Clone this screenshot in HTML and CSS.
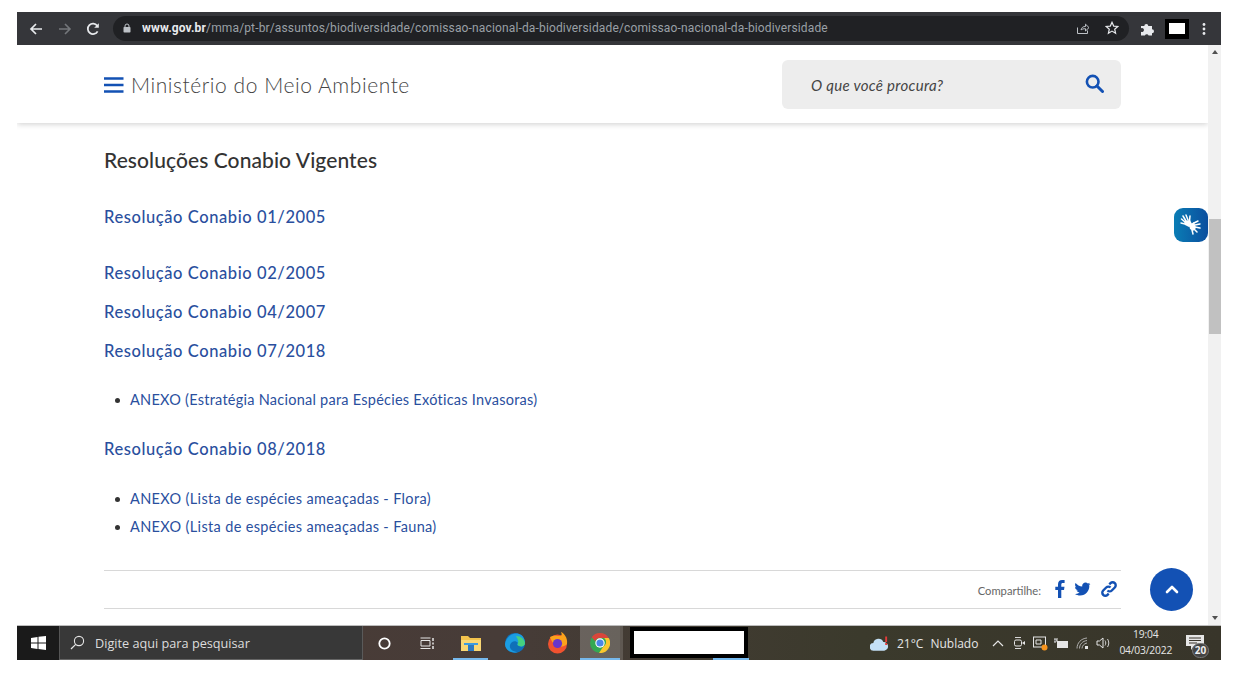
FILE: index.html
```html
<!DOCTYPE html>
<html lang="pt-BR">
<head>
<meta charset="utf-8">
<title>Ministério do Meio Ambiente</title>
<link rel="stylesheet" href="styles.css">
</head>
<body>
<div class="screen">
  <div class="chrome">
    <svg class="nav-icon" width="16" height="16" viewBox="0 0 16 16"><path d="M14 8H3M8 3L3 8l5 5" fill="none" stroke="#e8eaed" stroke-width="1.7"/></svg>
    <svg class="nav-icon" width="16" height="16" viewBox="0 0 16 16"><path d="M2 8h11M8 3l5 5-5 5" fill="none" stroke="#74777b" stroke-width="1.6"/></svg>
    <svg class="nav-icon" width="16" height="16" viewBox="0 0 16 16"><path d="M12.6 10.4A5.2 5.2 0 1 1 12.2 4.8" fill="none" stroke="#e8eaed" stroke-width="1.8"/><path d="M9.2 6.8h4.6V2.2z" fill="#e8eaed"/></svg>
    <div class="omnibox">
      <svg class="lock" width="8" height="10" viewBox="0 0 8 10"><path d="M2 4.500V3a2 2 0 0 1 4 0v1.500" fill="none" stroke="#bdc1c6" stroke-width="1"/><rect x="0.500" y="4" width="7" height="5.500" rx=".8" fill="#bdc1c6"/></svg>
      <span class="url"><b>www.gov.br</b>/mma/pt-br/assuntos/biodiversidade/comissao-nacional-da-biodiversidade/comissao-nacional-da-biodiversidade</span>
      <svg class="omni-icon" width="14" height="14" viewBox="0 0 14 14"><path d="M1.500 6.500v6h10V9.500M5 9c.5-2.500 2-3.500 4.500-3.500V3.200L13 6.600 9.500 10V7.700C7.500 7.700 6 8 5 9z" fill="none" stroke="#bdc1c6" stroke-width="1"/></svg>
      <svg class="omni-icon" width="14" height="14" viewBox="0 0 14 14"><path d="M7 1.300l1.700 3.800 4.100.4-3.100 2.700.9 4-3.600-2.100-3.600 2.100.9-4L1.200 5.500l4.100-.4z" fill="none" stroke="#e8eaed" stroke-width="1.200"/></svg>
    </div>
    <svg class="puzzle" width="15" height="15" viewBox="0 0 15 15"><path d="M1 5h3.300a2 2 0 1 1 4 0H12v3.300a2 2 0 1 1 0 4V14.500H8.600a2 2 0 0 0-3.700 0H1v-3.800a2 2 0 1 0 0-3.500z" fill="#e8eaed"/></svg>
    <div class="profile"><span class="profile-in"></span></div>
    <svg class="dots" width="4" height="14" viewBox="0 0 4 14"><circle cx="2" cy="2.500" r="1.400" fill="#e8eaed"/><circle cx="2" cy="7" r="1.400" fill="#e8eaed"/><circle cx="2" cy="11.500" r="1.400" fill="#e8eaed"/></svg>
  </div>

  <div class="viewport">
    <div class="page">
      <header class="site-header">
        <div class="brand">
          <svg class="burger" width="20" height="16" viewBox="0 0 20 16"><path d="M0 1.500h19.500M0 8h19.500M0 14.500h19.500" stroke="#1351b4" stroke-width="2.600"/></svg>
          <span class="brand-name">Ministério do Meio Ambiente</span>
        </div>
        <div class="search">
          <span class="search-text">O que você procura?</span>
          <svg class="search-icon" width="19" height="19" viewBox="0 0 19 19"><circle cx="7.700" cy="7.700" r="5.800" fill="none" stroke="#1351b4" stroke-width="2.600"/><path d="M12 12l5.500 5.500" stroke="#1351b4" stroke-width="3" stroke-linecap="round"/></svg>
        </div>
      </header>

      <main class="content">
        <h2 class="title">Resoluções Conabio Vigentes</h2>
        <a class="res res-first" href="#">Resolução Conabio 01/2005</a>
        <a class="res res-second" href="#">Resolução Conabio 02/2005</a>
        <a class="res res-next" href="#">Resolução Conabio 04/2007</a>
        <a class="res res-next" href="#">Resolução Conabio 07/2018</a>
        <ul class="annex annex-one">
          <li><a href="#">ANEXO (Estratégia Nacional para Espécies Exóticas Invasoras)</a></li>
        </ul>
        <a class="res res-after" href="#">Resolução Conabio 08/2018</a>
        <ul class="annex annex-two">
          <li><a href="#">ANEXO (Lista de espécies ameaçadas - Flora)</a></li>
          <li><a href="#">ANEXO (Lista de espécies ameaçadas - Fauna)</a></li>
        </ul>
        <div class="share">
          <span class="share-label">Compartilhe:</span>
          <svg width="10" height="18" viewBox="0 0 10 18"><path d="M3 18V10H.3V6.700H3V4.300C3 1.500 4.600 0 7.100 0c1.200 0 2.200.1 2.500.1v2.900H7.900C6.600 3 6.300 3.700 6.300 4.600v2.100h3.200L9 10H6.300v8z" fill="#1351b4"/></svg>
          <svg width="16" height="14" viewBox="0 0 17 14"><path d="M15.200 3.500v.5c0 4.600-3.500 9.800-9.800 9.800-2 0-3.800-.6-5.400-1.600 1.800.2 3.500-.3 4.900-1.400-1.500 0-2.800-1-3.200-2.400.6.100 1.100.1 1.600-.1C.9 8 .0 6.300 0 4.900c.5.300 1 .4 1.600.5C.1 4.300-.4 2.200.6 .6c1.700 2.100 4.300 3.500 7.100 3.700C7.200 1.700 9.200 0 11.100 0c1 0 1.900.4 2.500 1.100.8-.2 1.500-.4 2.200-.8-.3.8-.8 1.500-1.500 1.900.7-.1 1.400-.3 2-.5-.5.700-1 1.300-1.700 1.800z" fill="#1351b4"/></svg>
          <svg width="16" height="16" viewBox="0 0 16 16"><g fill="none" stroke="#1351b4" stroke-width="2.400"><path d="M6.500 9.500a3 3 0 0 0 4.300 0l3-3a3 3 0 0 0-4.300-4.300L8.300 3.400"/><path d="M9.500 6.500a3 3 0 0 0-4.300 0l-3 3a3 3 0 0 0 4.300 4.300l1.200-1.200"/></g></svg>
        </div>
      </main>

      <button class="vlibras" aria-label="VLibras">
        <svg width="22" height="22" viewBox="0 0 22 22"><g fill="none" stroke="#fff" stroke-width="1.500" stroke-linecap="round"><path d="M3 2l3 5M6 1l2 5M1.500 5l4 3.500M10 2L9.500 7M1 9l4 1"/><path d="M14 9l4-2M15 11l5-1M15 13l5 1M14 15l3 3M12 16l1 4"/></g><path d="M4 7l6-1 2 4-3 3-4-2zM9 11l5-3 2 6-3 3-3-2z" fill="#fff"/></svg>
      </button>
      <button class="to-top" aria-label="Voltar ao topo">
        <svg width="14" height="9" viewBox="0 0 14 9"><path d="M2 7l5-5 5 5" fill="none" stroke="#fff" stroke-width="2.600" stroke-linecap="round" stroke-linejoin="round"/></svg>
      </button>
    </div>
    <div class="scrollbar">
      <span class="arrow-up"></span>
      <span class="thumb"></span>
      <span class="arrow-down"></span>
    </div>
  </div>

  <div class="taskbar">
    <div class="start">
      <svg width="15" height="14" viewBox="0 0 15 14"><path d="M0 2l6.500-1v5.500H0zM7.500 .8L15 0v6.500H7.500zM0 7.500h6.500V13L0 12zM7.500 7.500H15V14l-7.500-1z" fill="#fff"/></svg>
    </div>
    <div class="tb-search">
      <svg width="15" height="15" viewBox="0 0 15 15"><circle cx="9" cy="6" r="4.600" fill="none" stroke="#e6e6e6" stroke-width="1.100"/><path d="M5.700 9.300L1 14" stroke="#e6e6e6" stroke-width="1.200"/></svg>
      <span>Digite aqui para pesquisar</span>
    </div>
    <div class="tb-apps">
      <div class="app"><svg width="15" height="15" viewBox="0 0 15 15"><circle cx="7.500" cy="7.500" r="5.200" fill="none" stroke="#fff" stroke-width="1.800"/></svg></div>
      <div class="app"><svg width="15" height="13" viewBox="0 0 15 13"><path d="M.5 1h10M.5 11.500h10M1 3.500h9v5.500H1z" fill="none" stroke="#e6e6e6" stroke-width="1"/><path d="M13 1v3M13 5.500v2M13 9v3" stroke="#e6e6e6" stroke-width="1.500"/></svg></div>
      <div class="app app-open"><svg width="20" height="17" viewBox="0 0 20 17"><path d="M0 1h7l2 2h11v13H0z" fill="#f3c34d"/><path d="M0 5h20v11H0z" fill="#f9d774"/><path d="M7 10h6v6H7z" fill="#2b79c2"/><path d="M3 8h14v2H3z" fill="#3c9be0"/></svg></div>
      <div class="app"><svg width="22" height="22" viewBox="0 0 22 22"><circle cx="11" cy="11" r="10" fill="#0f6fb8"/><path d="M1 12C2 5 9 0 15 2c4 1 6 5 6 9 0 3-3 4-6 3-2-.5-2-2-1-3-2-3-7-2-8 2-1 4 3 7 8 7C7 22 1 18 1 12z" fill="#1b9de2"/><path d="M12 4c5 0 8 3 9 7 0 3-3 4-6 3-1-.5-2-1.500-1-3 1-2-1-5-2-7z" fill="#45d07f"/></svg></div>
      <div class="app"><svg width="21" height="22" viewBox="0 0 21 22"><circle cx="10.500" cy="12" r="9.500" fill="#f0522f"/><path d="M3 5c3 10 12 12 17 7C21 6 17 1 14 0c1 2 1 4-1 4S6 3 3 5z" fill="#fba21c"/><circle cx="10.500" cy="11.500" r="4.600" fill="#6a35c9"/></svg></div>
      <div class="app app-chrome"><svg width="20" height="20" viewBox="0 0 20 20"><circle cx="10" cy="10" r="10" fill="#34a853"/><path d="M10 0a10 10 0 0 1 8.700 5H10a5 5 0 0 0-4.700 3.200L1.700 4.200A10 10 0 0 1 10 0z" fill="#d9453b"/><path d="M18.700 5A10 10 0 0 1 9 20l4.300-6.500A5 5 0 0 0 14 5z" fill="#fbc62d"/><circle cx="10" cy="10" r="4.700" fill="#fff"/><circle cx="10" cy="10" r="3.600" fill="#4a86e8"/></svg></div>
      <div class="app-sep"></div>
      <div class="redact-wrap"><div class="redact"></div></div>
    </div>
    <div class="tray">
      <svg class="weather" width="19" height="15" viewBox="0 0 20 15"><path d="M4 15a4 4 0 0 1-.5-8A5.500 5.500 0 0 1 14 6a4.500 4.500 0 0 1 1 9z" fill="#c4e0f6"/><path d="M16 0h2v6h-2zM16 7h2v2h-2z" fill="#e03b3b"/></svg>
      <span class="temp">21°C</span>
      <span class="cond">Nublado</span>
      <svg class="tray-ic caret" width="12" height="8" viewBox="0 0 12 8"><path d="M1 7l5-5 5 5" fill="none" stroke="#e6e6e6" stroke-width="1.200"/></svg>
      <svg class="tray-ic meet" width="13" height="14" viewBox="0 0 13 14"><path d="M2 1.500h6M2 12.500h6" stroke="#d8d8d8"/><rect x="1.500" y="4" width="7" height="6" rx="1.500" fill="none" stroke="#e6e6e6"/><path d="M9 7l3-2v4z" fill="#e6e6e6"/></svg>
      <svg class="tray-ic screen-ic" width="15" height="15" viewBox="0 0 15 15"><rect x=".5" y="1" width="12" height="10" fill="none" stroke="#e6e6e6"/><path d="M3 4h5v4H3z" fill="none" stroke="#e6e6e6"/><circle cx="11.500" cy="11.500" r="3" fill="#f7941d"/></svg>
      <svg class="tray-ic battery" width="15" height="11" viewBox="0 0 15 11"><path d="M0 1h2v3H0zM3 0v3" stroke="#e6e6e6"/><rect x="3" y="3" width="11" height="7" fill="#e6e6e6"/></svg>
      <svg class="tray-ic wifi" width="13" height="12" viewBox="0 0 13 12"><g fill="none" stroke="#bbb" stroke-width=".9"><path d="M1 11.500C1 6 5 1.500 11 1"/><path d="M3.500 11.500C3.500 7.500 6.500 4 11 3.500"/><path d="M6 11.500C6 9 8 6.500 11 6"/></g><path d="M9 9h3v3H9z" fill="#e6e6e6"/></svg>
      <svg class="tray-ic speaker" width="15" height="12" viewBox="0 0 15 12"><path d="M1 4h2.500L7 1v10L3.500 8H1z" fill="none" stroke="#e6e6e6"/><path d="M9 3.500c1 1.500 1 3.500 0 5M11.500 2c1.700 2.500 1.700 5.500 0 8" fill="none" stroke="#d0d0d0"/></svg>
      <div class="clock"><span>19:04</span><span>04/03/2022</span></div>
      <div class="notif">
        <svg class="notif-icon" width="18" height="15" viewBox="0 0 18 15"><path d="M0 0h18v11H8l-3 4v-4H0z" fill="#e6e6e6"/><path d="M3 3h12M3 5.500h12M3 8h8" stroke="#3a352c"/></svg>
        <span class="badge">20</span>
      </div>
    </div>
  </div>
</div>
</body>
</html>
```
FILE: styles.css
```css
* { box-sizing: border-box; }
html, body { margin: 0; padding: 0; background: #fff; overflow: hidden; }
body { width: 1238px; height: 676px; font-family: "Lato", "Liberation Sans", sans-serif; }
.screen { width: 1204px; height: 648px; margin: 12px 0 0 17px; display: flex; flex-direction: column; }

/* browser chrome */
.chrome { height: 33px; flex: none; background: #35363a; display: flex; align-items: center; padding-left: 11px; }
.nav-icon { margin-right: 13px; flex: none; }
.nav-icon:nth-child(3) { margin-right: 12px; margin-left: -1px; }
.omnibox { width: 1016px; height: 25px; margin-top: -1px; background: #202124; border-radius: 13px; display: flex; align-items: center; padding-left: 10px; }
.lock { flex: none; margin-right: 11px; }
.url { flex: 1; font: 12px/25px "Roboto", sans-serif; letter-spacing: .145px; color: #9aa0a6; white-space: nowrap; overflow: hidden; }
.url b { color: #e8eaed; font-weight: 700; }
.omni-icon { flex: none; margin-right: 15px; }
.omni-icon:last-child { margin-right: 10px; }
.puzzle { flex: none; margin-left: 11px; }
.profile { flex: none; width: 24px; height: 20px; margin-left: 10px; background: #000; display: flex; align-items: center; justify-content: center; }
.profile-in { width: 16px; height: 11px; background: #fff; }
.dots { flex: none; margin-left: 13px; }

/* viewport */
.viewport { flex: none; height: 580px; display: flex; }
.page { position: relative; width: 1191px; height: 580px; overflow: hidden; background: #fff; }
.scrollbar { width: 13px; height: 580px; background: #f1f1f1; display: flex; flex-direction: column; align-items: center; }
.arrow-up { margin-top: 5px; border: 3px solid transparent; border-top: 0; border-bottom: 4px solid #505050; }
.thumb { width: 12px; height: 115px; margin-top: 165px; margin-left: 1px; background: #c1c1c1; }
.arrow-down { margin-top: auto; margin-bottom: 5px; border: 3px solid transparent; border-bottom: 0; border-top: 4px solid #505050; }

.site-header { height: 78px; display: flex; align-items: center; justify-content: space-between; padding: 1px 87px 0; background: #fff; box-shadow: 0 1px 6px rgba(0,0,0,.2); }
.brand { display: flex; align-items: center; }
.burger { margin-right: 7px; }
.brand-name { font-size: 21px; font-weight: 300; color: #444; letter-spacing: .56px; white-space: nowrap; }
.search { width: 339px; height: 49px; background: #ededed; border-radius: 6px; display: flex; align-items: center; justify-content: space-between; padding: 0 17px 0 29px; }
.search-text { font-size: 15px; font-style: italic; color: #444; letter-spacing: .3px; }
.search-icon { margin-top: -3px; }

.content { padding: 0 87px; }
.title { margin: 25px 0 0; font-size: 21px; line-height: 24px; font-weight: 500; color: #333; letter-spacing: .08px; }
.res { display: block; font-size: 16.500px; line-height: 20px; font-weight: 500; color: #2a4f9e; text-decoration: none; letter-spacing: .58px; }
.res-first { margin-top: 35px; }
.res-second { margin-top: 36px; }
.res-next { margin-top: 19px; }
.res-after { margin-top: 24px; }
.annex { list-style: none; margin: 0; padding: 0 0 0 26px; }
.annex-one { margin-top: 25px; }
.annex-two { margin-top: 26px; }
.annex li { position: relative; font-size: 14.500px; line-height: 28.500px; }
.annex li::before { content: ""; position: absolute; left: -15px; top: 12px; width: 5px; height: 5px; border-radius: 50%; background: #333; }
.annex a { color: #2a4f9e; text-decoration: none; letter-spacing: .25px; white-space: nowrap; }
.annex-two a { letter-spacing: .34px; }
.share { margin-top: 28px; height: 39px; border-top: 1px solid #d8d8d8; border-bottom: 1px solid #d8d8d8; display: flex; align-items: center; justify-content: flex-end; gap: 10px; padding-right: 4px; }
.share-label { font-size: 11.200px; color: #666; margin: 2px 4px 0 0; }

.vlibras { position: absolute; right: 0; top: 163px; width: 34px; height: 34px; padding: 0; border: 0; border-radius: 9px; background: linear-gradient(90deg, #0a7db5, #0b4e9e); display: flex; align-items: center; justify-content: center; }
.to-top { position: absolute; left: 1133px; top: 523px; width: 43px; height: 43px; padding: 0; border: 0; border-radius: 50%; background: #1351b4; display: flex; align-items: center; justify-content: center; }

/* taskbar */
.taskbar { flex: none; height: 35px; display: flex; background: linear-gradient(90deg, #4a3a34 0, #473c38 40%, #3b3a2c 70%, #38352a 100%); border-top: 1px solid #bdbdbd; color: #e6e6e6; }
.start { width: 42px; background: #1a1a1a; display: flex; align-items: center; justify-content: center; }
.tb-search { width: 304px; background: #383838; border-left: 1px solid #555; border-right: 1px solid #5a5a5a; border-bottom: 1px solid #666; display: flex; align-items: center; gap: 10px; padding-left: 10px; font: 12.700px "Open Sans", sans-serif; color: #ddd; }
.tb-apps { display: flex; align-items: stretch; }
.app { width: 43px; display: flex; align-items: center; justify-content: center; }
.app-open { width: 35px; margin: 0 5px 0 4px; box-shadow: inset 0 -2px 0 #76b9ed; }
.app-chrome { width: 40px; margin-left: 1px; background: rgba(255,255,255,.2); box-shadow: inset 0 -2px 0 #76b9ed; }
.app-sep { width: 3px; margin: 0 7px 0 0; background: rgba(255,255,255,.15); }
.redact-wrap { width: 119px; padding-top: 1px; background: linear-gradient(#76b9ed, #76b9ed) right bottom / 36px 2px no-repeat; }
.redact { width: 118px; height: 31px; background: #fff; border: 4px solid #000; }
.tray { flex: 1; display: flex; align-items: center; padding-left: 121px; min-width: 0; }
.weather { flex: none; margin-right: 8px; }
.temp, .cond { font: 12px "Open Sans", sans-serif; color: #e6e6e6; white-space: nowrap; }
.cond { margin-left: 7px; margin-right: 14px; }
.tray-ic { flex: none; }
.caret { margin-right: 9px; }
.meet { margin-right: 7px; }
.screen-ic { margin-right: 6px; }
.battery { margin-right: 7px; }
.wifi { margin-right: 7px; }
.clock { flex: none; display: flex; flex-direction: column; align-items: center; font: 10.300px/16px "Open Sans", sans-serif; margin: -2px 14px 0 8px; white-space: nowrap; letter-spacing: -.2px; }
.notif { position: relative; flex: none; width: 18px; height: 20px; }
.notif-icon { display: block; margin-top: 2px; }
.badge { position: absolute; left: 6px; top: 10px; width: 17px; height: 15px; border-radius: 8px; background: #444; border: 1px solid #777; font: 700 10px/13px "Open Sans", sans-serif; text-align: center; color: #eee; }
```
